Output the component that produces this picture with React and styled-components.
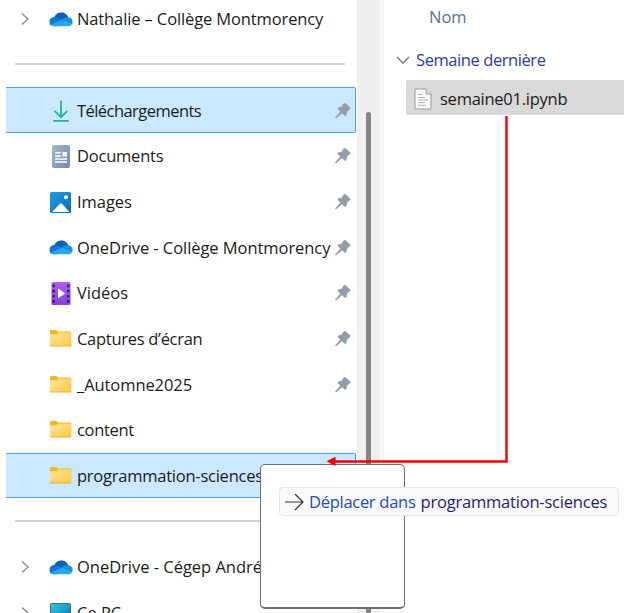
import React from 'react';
import styled, { createGlobalStyle } from 'styled-components';

const GlobalStyle = createGlobalStyle`
  *, *::before, *::after { box-sizing: border-box; }
  html, body { margin: 0; padding: 0; background: #fff; overflow: hidden; }
  svg { display: block; flex: none; }
`;

const Explorer = styled.div`
  position: relative;
  display: grid;
  grid-template-columns: 357px 23px 4px 1fr;
  width: 624px;
  height: 613px;
  overflow: hidden;
  background: #fff;
  color: #1b1b1b;
  font-family: "Open Sans", "Noto Sans", sans-serif;
  font-size: 16.5px;
`;

const Sidebar = styled.nav`
  display: flex;
  flex-direction: column;
  height: 613px;
  overflow: hidden;
  padding-left: 6px;
`;

const NavRow = styled.div`
  flex: none;
  display: grid;
  grid-template-columns: 37px 34px 1fr 20px;
  align-items: center;
  width: 350px;
  height: 45.68px;
  padding-top: 1px;
  border: solid ${(p) => (p.$selected ? '#4a9fe0' : 'transparent')};
  border-width: 1px 1px 1px 0;
  border-radius: 0 2px 2px 0;
  background: ${(p) => (p.$selected ? '#cce8ff' : 'transparent')};

  &:first-child { margin-top: -4px; }
`;

const ChevronSlot = styled.span`
  padding-left: 15px;
`;

const IconSlot = styled.span`
  display: flex;
  justify-content: center;
  width: 35px;
`;

const Label = styled.span`
  white-space: nowrap;
  line-height: 24px;
  letter-spacing: ${(p) => p.$tracking || 0}px;
`;

const Divider = styled.div`
  flex: none;
  display: flex;
  align-items: center;
  height: 45.68px;
  padding: 0 12px 1px 9px;

  &::before {
    content: "";
    flex: 1;
    height: 2px;
    background: #d0d0d0;
  }
`;

const ScrollTrack = styled.div`
  display: flex;
  justify-content: center;
  padding-top: 112px;
  background: #efefef;
`;

const ScrollThumb = styled.div`
  width: 5px;
  border-radius: 3px 3px 0 0;
  background: #858585;
`;

const PaneEdge = styled.div`
  border-left: 1px solid #fafafa;
  border-right: 2px solid #f4f4f4;
`;

const FilePane = styled.main`
  display: flex;
  flex-direction: column;
  min-width: 0;
`;

const ColumnHeader = styled.div`
  height: 34px;
  padding: 5px 0 0 45px;
  color: #5c6f8a;
  line-height: 24px;
  letter-spacing: ${(p) => p.$tracking}px;
`;

const GroupHeader = styled.div`
  display: flex;
  align-items: center;
  gap: 6px;
  height: 46px;
  padding: 6px 0 0 12px;
  color: #2c3c9c;
`;

const FileRow = styled.div`
  display: flex;
  align-items: center;
  gap: 8px;
  height: 35px;
  margin-left: 22px;
  padding: 2px 0 0 8px;
  border-radius: 2px 0 0 2px;
  background: #d9d9d9;
`;

const DragGhost = styled.div`
  position: absolute;
  left: 260px;
  top: 464px;
  width: 145px;
  height: 145px;
  border: 1.5px solid #707070;
  border-bottom-width: 2px;
  border-radius: 5px;
  background: #fff;
`;

const DropTip = styled.div`
  position: absolute;
  left: 279px;
  top: 487px;
  display: flex;
  align-items: center;
  width: 340px;
  height: 29px;
  padding: 1px 0 0 5px;
  border: 1px solid #e6e6e6;
  border-radius: 4px;
  background: #fafafa;
`;

const TipAction = styled(Label)`
  margin: 0 5px 0 5px;
  color: #2348d8;
`;

const TipTarget = styled(Label)`
  color: #1d1d78;
`;

const DragPath = styled.svg`
  position: absolute;
  left: 0;
  top: 0;
  pointer-events: none;
`;

const Chevron = () => (
  <svg width="9" height="14" viewBox="0 0 9 14" fill="none" stroke="#8c8c8c" strokeWidth="1.4">
    <path d="M1 1.5 7 7 1 12.5" />
  </svg>
);

const ChevronDown = () => (
  <svg width="14" height="9" viewBox="0 0 14 9" fill="none" stroke="#777" strokeWidth="1.3">
    <path d="M1 1 7 7 13 1" />
  </svg>
);

const CloudIcon = () => (
  <svg width="24" height="15" viewBox="0 0 24 16" preserveAspectRatio="none">
    <path d="M5 5.5C6.5 2.2 9 .5 12 .5c3.7 0 6.5 2.1 7.3 5.5L12 10z" fill="#0c5fb9" />
    <path d="M5.2 15.3A5 5 0 0 1 .5 10.3c0-2.9 2.2-5 5-5 2.3 0 4 1 6.5 2.7l3.3 2.2-7 5.1z" fill="#0f78d4" />
    <path d="M12.2 8.3c1.8-1.7 4-2.6 6.5-2.6 2.8 0 4.9 2.1 4.9 4.9 0 1-.3 2-.8 2.7z" fill="#1490df" />
    <path d="M2 13.7 12.7 8.2l10.1 5.1c-.9 1.3-2.1 2-3.6 2H5.4c-1.3 0-2.5-.6-3.4-1.6z" fill="#27a7ea" />
  </svg>
);

const DownloadIcon = () => (
  <svg width="18" height="22" viewBox="0 0 18 22" fill="none" stroke="#20b795" strokeWidth="1.8">
    <path d="M9 .8v16M2.6 10.8 9 17.1l6.4-6.3M1.2 20.8h15.6" strokeLinejoin="round" />
  </svg>
);

const DocumentsIcon = () => (
  <svg width="18" height="23" viewBox="0 0 18 23">
    <defs>
      <linearGradient id="docs" x1="0" y1="0" x2="1" y2="1">
        <stop offset="0" stopColor="#a2b7cd" />
        <stop offset="1" stopColor="#6f8bab" />
      </linearGradient>
    </defs>
    <rect width="18" height="23" rx="2" fill="url(#docs)" />
    <path d="M3 7.8h6M3 11h6M3 14h12M3 17h12" stroke="#fff" strokeWidth="1.3" />
    <rect x="10.5" y="7" width="4.5" height="4.5" fill="#fff" />
  </svg>
);

const PicturesIcon = () => (
  <svg width="21" height="21" viewBox="0 0 21 21">
    <defs>
      <linearGradient id="pics" x1="0" y1="0" x2="1" y2="1">
        <stop offset="0" stopColor="#20a0e3" />
        <stop offset="1" stopColor="#0969bf" />
      </linearGradient>
    </defs>
    <rect width="21" height="21" rx="1.5" fill="url(#pics)" />
    <path d="m2 20.1 8-8.4q1-.9 2 0l7.5 8.4z" fill="#fff" />
    <circle cx="16" cy="5.3" r="2" fill="#fff" />
  </svg>
);

const VideosIcon = () => (
  <svg width="20" height="23" viewBox="0 0 20 23">
    <defs>
      <linearGradient id="vids" x1="0" y1="0" x2="0" y2="1">
        <stop offset="0" stopColor="#b160e9" />
        <stop offset="1" stopColor="#8542df" />
      </linearGradient>
    </defs>
    <rect x=".5" width="19" height="23" rx="1.5" fill="url(#vids)" />
    <path d="M2.7 2.5v18.4M17.3 2.5v18.4" stroke="#41207b" strokeWidth="2.6" strokeDasharray="2.7 2.5" />
    <path d="M7 6.5v9.8l7.3-4.9z" fill="#fff" />
  </svg>
);

const FolderIcon = () => (
  <svg width="22" height="18" viewBox="0 0 22 18">
    <defs>
      <linearGradient id="folder" x1="0" y1="0" x2="1" y2="1">
        <stop offset="0" stopColor="#ffe6a0" />
        <stop offset="1" stopColor="#ffc93f" />
      </linearGradient>
    </defs>
    <path d="M0 1q0-1 1-1h5.2L8 1.6h12.2q1 0 1 1v13H0z" fill="#f5b51d" />
    <path d="M0 4.2h6.7L8.5 2.4h12.7v13.4H0z" fill="url(#folder)" />
    <path d="M0 16h21.2" stroke="#e9af28" />
  </svg>
);

const ComputerIcon = () => (
  <svg width="21" height="20" viewBox="0 0 21 20">
    <defs>
      <linearGradient id="screen" x1="0" y1="0" x2="1" y2="1">
        <stop offset="0" stopColor="#32cddd" />
        <stop offset="1" stopColor="#0875b9" />
      </linearGradient>
    </defs>
    <rect x=".5" y=".5" width="20" height="15" rx="1" fill="url(#screen)" stroke="#496979" />
    <path d="M10.5 16v3M6 19.5h9" stroke="#68777e" strokeWidth="2" />
  </svg>
);

const PinIcon = () => (
  <svg width="16" height="16" viewBox="0 0 16 16">
    <path
      d="M8.2 1.4Q9.6-.2 11 1l3.8 3.5q1 1-.4 1.8l-2.4 1.5-1 4q-.4 1.3-1.5.3L7 9.7 1.6 14.6l-1 .3.4-1L5.8 8.6 3.3 6.2q-.8-1 .4-1.4l3.6-.9z"
      fill="#929da5"
      stroke="#929da5"
      strokeWidth=".9"
      strokeLinejoin="round"
    />
  </svg>
);

const NotebookIcon = () => (
  <svg width="18" height="22" viewBox="0 0 18 22" fill="none">
    <path d="M1 1h11l5 5v15H1z" fill="#fafafa" stroke="#999" />
    <path d="M12 1v5h5" fill="#e5e5e5" stroke="#999" />
    <path d="M4 6.5h5M4 9.5h7M4 12h10M4 14.7h7M4 17.3h8" stroke="#b4b4b4" />
  </svg>
);

const MoveArrow = () => (
  <svg width="19" height="18" viewBox="0 0 19 18" fill="none" stroke="#333" strokeWidth="1.2">
    <path d="M0 9h18M10 1l8 8-8 8" />
  </svg>
);

const items = [
  { label: 'Nathalie – Collège Montmorency', Icon: CloudIcon, chevron: true, tracking: -0.12 },
  { divider: true },
  { label: 'Téléchargements', Icon: DownloadIcon, pinned: true, selected: true, tracking: -0.55 },
  { label: 'Documents', Icon: DocumentsIcon, pinned: true, tracking: -0.22 },
  { label: 'Images', Icon: PicturesIcon, pinned: true, tracking: -0.05 },
  { label: 'OneDrive - Collège Montmorency', Icon: CloudIcon, pinned: true, tracking: -0.06 },
  { label: 'Vidéos', Icon: VideosIcon, pinned: true, tracking: 0 },
  { label: 'Captures d’écran', Icon: FolderIcon, pinned: true, tracking: -0.28 },
  { label: '_Automne2025', Icon: FolderIcon, pinned: true, tracking: -0.08 },
  { label: 'content', Icon: FolderIcon, tracking: -0.33 },
  { label: 'programmation-sciences', Icon: FolderIcon, selected: true, tracking: -0.24 },
  { divider: true },
  { label: 'OneDrive - Cégep André', Icon: CloudIcon, chevron: true, tracking: -0.02 },
  { label: 'Ce PC', Icon: ComputerIcon, chevron: true, tracking: 0 },
];

export default function App() {
  return (
    <>
      <GlobalStyle />
      <Explorer>
        <Sidebar>
          {items.map(({ label, Icon, divider, chevron, pinned, selected, tracking }, i) =>
            divider ? (
              <Divider key={i} />
            ) : (
              <NavRow key={i} $selected={selected}>
                <ChevronSlot>{chevron && <Chevron />}</ChevronSlot>
                <IconSlot><Icon /></IconSlot>
                <Label $tracking={tracking}>{label}</Label>
                {pinned && <PinIcon />}
              </NavRow>
            )
          )}
        </Sidebar>
        <ScrollTrack><ScrollThumb /></ScrollTrack>
        <PaneEdge />
        <FilePane>
          <ColumnHeader $tracking={0}>Nom</ColumnHeader>
          <GroupHeader>
            <ChevronDown />
            <Label $tracking={-0.42}>Semaine dernière</Label>
          </GroupHeader>
          <FileRow>
            <NotebookIcon />
            <Label $tracking={-0.25}>semaine01.ipynb</Label>
          </FileRow>
        </FilePane>
        <DragGhost />
        <DropTip>
          <MoveArrow />
          <TipAction $tracking={-0.28}>Déplacer dans</TipAction>
          <TipTarget $tracking={-0.2}>programmation-sciences</TipTarget>
        </DropTip>
        <DragPath width="624" height="613">
          <path d="M506.5 116v345.5H334" fill="none" stroke="#f40000" strokeWidth="2.4" />
          <path d="m326.5 461.3 9-4.6v9.2z" fill="#f40000" />
        </DragPath>
      </Explorer>
    </>
  );
}
